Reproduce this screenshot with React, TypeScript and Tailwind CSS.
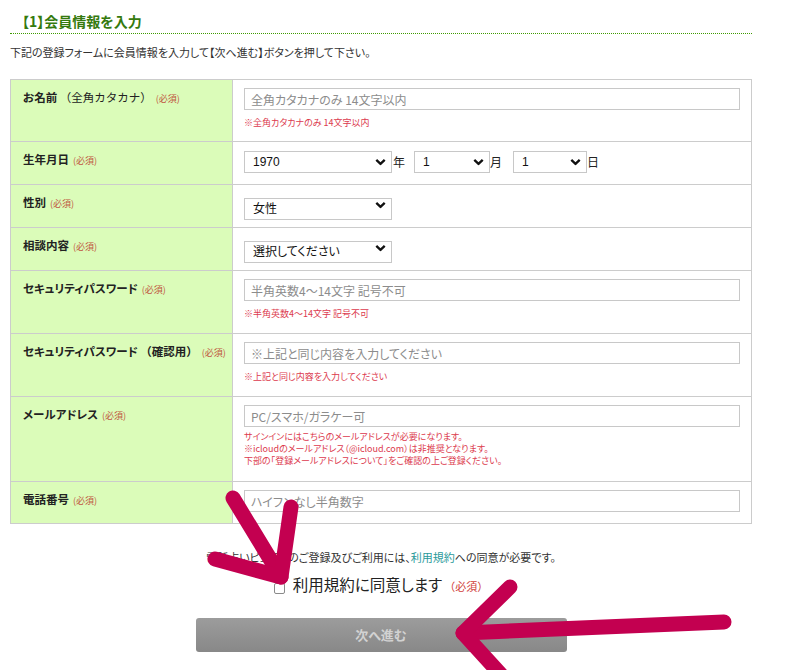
import React from "react";

const Req = () => (
  <span className="ml-[4px] text-[9px] font-normal text-[#c0553f]">(必須)</span>
);

const Chevron = () => (
  <svg
    className="pointer-events-none absolute right-[6px] top-1/2 -translate-y-1/2"
    width="11"
    height="7"
    viewBox="0 0 11 7"
  >
    <path d="M1.3 1.3 L5.5 5.3 L9.7 1.3" fill="none" stroke="#111" strokeWidth="2.4" />
  </svg>
);

const Select = ({ w, value, options }: { w: string; value: string; options: string[] }) => (
  <div className={`relative ${w} h-[22px]`}>
    <select
      defaultValue={value}
      className="h-full w-full appearance-none border border-[#c8c8c8] bg-white pl-[8px] text-[12px] text-[#111] font-['Liberation_Sans','Noto_Sans_CJK_JP',sans-serif] outline-none"
    >
      {options.map((o) => (
        <option key={o}>{o}</option>
      ))}
    </select>
    <Chevron />
  </div>
);

const Input = ({ ph }: { ph: string }) => (
  <input
    placeholder={ph}
    className="block h-[22px] w-full border border-[#c8c8c8] bg-white px-[6px] text-[12px] text-[#333] placeholder:text-[#8c8c8c] outline-none"
  />
);

const Hint = ({ children }: { children: React.ReactNode }) => (
  <div className="mt-[7px] text-[9px] leading-[12px] text-[#dc3a4e]">{children}</div>
);

const Row = ({
  h,
  last,
  label,
  children,
}: {
  h: string;
  last?: boolean;
  label: React.ReactNode;
  children: React.ReactNode;
}) => (
  <>
    <div
      className={`${h} ${last ? "" : "border-b"} border-r border-[#cccccc] bg-[#dbfcb9] pl-[12px] pt-[9px] text-[11.5px] font-bold leading-[16px] text-[#222]`}
    >
      {label}
    </div>
    <div className={`${h} ${last ? "" : "border-b"} border-[#cccccc] bg-white pl-[11px] pr-[11px] pt-[8px]`}>
      {children}
    </div>
  </>
);

export default function App() {
  return (
    <div className="relative h-[670px] w-[809px] overflow-hidden bg-white font-['Noto_Sans_CJK_JP',sans-serif] text-[#333] [font-feature-settings:'palt']">
      <div className="ml-[10px] w-[742px]">
        <div className="border-b border-dotted border-[#3f9a00] pb-[2px] pl-[12px] pt-[11px] text-[14px] font-bold leading-[20px] text-[#357a0e]">
          【1】会員情報を入力
        </div>
        <div className="mt-[10px] text-[11px] leading-[16px] text-[#333]">
          下記の登録フォームに会員情報を入力して【次へ進む】ボタンを押して下さい。
        </div>

        <div className="mt-[19px] grid grid-cols-[222px_1fr] border border-[#cccccc]">
          <Row
            h="h-[62px]"
            label={
              <>
                お名前 <span className="font-normal [font-feature-settings:normal]">（全角カタカナ）</span>
                <Req />
              </>
            }
          >
            <Input ph="全角カタカナのみ 14文字以内" />
            <Hint>※全角カタカナのみ 14文字以内</Hint>
          </Row>
          <Row
            h="h-[43px]"
            label={
              <>
                生年月日
                <Req />
              </>
            }
          >
            <div className="mt-[1px] flex items-center text-[12px] text-[#222]">
              <Select w="w-[148px]" value="1970" options={["1970"]} />
              <span className="ml-[1px]">年</span>
              <div className="ml-[9px]">
                <Select w="w-[76px]" value="1" options={["1"]} />
              </div>
              <span>月</span>
              <div className="ml-[11px]">
                <Select w="w-[74px]" value="1" options={["1"]} />
              </div>
              <span>日</span>
            </div>
          </Row>
          <Row
            h="h-[43px]"
            label={
              <>
                性別
                <Req />
              </>
            }
          >
            <div className="mt-[1px]">
              <Select w="w-[148px]" value="女性" options={["女性"]} />
            </div>
          </Row>
          <Row
            h="h-[43px]"
            label={
              <>
                相談内容
                <Req />
              </>
            }
          >
            <div className="mt-[1px]">
              <Select w="w-[148px]" value="選択してください" options={["選択してください"]} />
            </div>
          </Row>
          <Row
            h="h-[63px]"
            label={
              <>
                セキュリティパスワード
                <Req />
              </>
            }
          >
            <Input ph="半角英数4～14文字 記号不可" />
            <Hint>※半角英数4～14文字 記号不可</Hint>
          </Row>
          <Row
            h="h-[63px]"
            label={
              <>
                セキュリティパスワード <span className="[font-feature-settings:normal]">（確認用）</span>
                <Req />
              </>
            }
          >
            <Input ph="※上記と同じ内容を入力してください" />
            <Hint>※上記と同じ内容を入力してください</Hint>
          </Row>
          <Row
            h="h-[85px]"
            label={
              <>
                メールアドレス
                <Req />
              </>
            }
          >
            <Input ph="PC/スマホ/ガラケー可" />
            <div className="mt-[4px] text-[9px] leading-[12px] text-[#dc3a4e]">
              <div>サインインにはこちらのメールアドレスが必要になります。</div>
              <div>※icloudのメールアドレス（@icloud.com）は非推奨となります。</div>
              <div>下部の「登録メールアドレスについて」をご確認の上ご登録ください。</div>
            </div>
          </Row>
          <Row
            h="h-[41px]"
            last
            label={
              <>
                電話番号
                <Req />
              </>
            }
          >
            <Input ph="ハイフンなし半角数字" />
          </Row>
        </div>

        <div className="mt-[25px] text-center text-[11px] leading-[16px] text-[#333]">
          電話占いピュアリのご登録及びご利用には、<span className="text-[#2a9a9a]">利用規約</span>への同意が必要です。
        </div>
        <div className="mt-[8px] flex items-center justify-center">
          <input
            type="checkbox"
            className="mr-[8px] mt-[8px] h-[11px] w-[11px] appearance-none rounded-[2px] border border-[#8a8a8a] bg-white"
          />
          <span className="text-[15.5px] leading-[22px] text-[#222]">利用規約に同意します</span>
          <span className="ml-[2px] mt-[4px] text-[11px] text-[#d0403a] [font-feature-settings:normal]">（必須）</span>
        </div>
        <div className="mt-[23px] flex justify-center">
          <button className="h-[34px] w-[371px] rounded-[3px] bg-gradient-to-b from-[#9c9c9c] to-[#888888] text-[13px] font-bold text-[#d2d2d2]">
            次へ進む
          </button>
        </div>
      </div>

      <svg
        className="pointer-events-none absolute left-0 top-0"
        width="809"
        height="670"
        viewBox="0 0 809 670"
      >
        <g stroke="#c30050" strokeWidth="15" strokeLinecap="round" strokeLinejoin="round" fill="none">
          <path d="M233 498 L281 577" />
          <path d="M291 507 L281 577 L215 559" />
          <path d="M724 622 L463 633" />
          <path d="M510 587 L463 633 L515 690" />
        </g>
      </svg>
    </div>
  );
}
